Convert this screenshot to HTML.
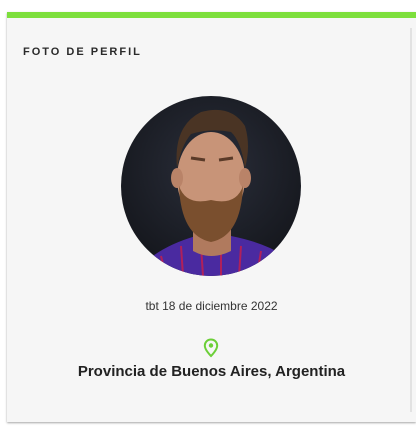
<!DOCTYPE html>
<html><head><style>
html,body{margin:0;padding:0;background:#fff;width:416px;height:428px;overflow:hidden;font-family:"Liberation Sans",Roboto,sans-serif}
.card{position:absolute;left:7px;top:12px;width:409px;height:410px;background:#f6f6f6;box-shadow:0 1px 2px rgba(0,0,0,.35)}
.bar{position:absolute;left:0;top:0;right:0;height:6px;background:#7ddf3c}
.sb{position:absolute;left:403px;top:16px;width:2px;height:384px;background:#e2e2e2}
.title{position:absolute;left:16px;top:34px;font-size:11px;font-weight:bold;letter-spacing:2px;color:#2a2a2a}
.pic{position:absolute;left:114px;top:84px;width:180px;height:180px;border-radius:50%;overflow:hidden}
.date{position:absolute;left:0;width:409px;top:287px;text-align:center;font-size:12px;color:#333}
.pin{position:absolute;left:196px;top:326px}
.loc{position:absolute;left:0;width:409px;top:351px;text-align:center;font-size:15px;font-weight:bold;color:#222}
</style></head><body>
<div class="card">
<div class="bar"></div>
<div class="sb"></div>
<div class="title">FOTO DE PERFIL</div>
<div class="pic"><svg width="180" height="180" viewBox="0 0 180 180">
<defs><radialGradient id="bg" cx="50%" cy="40%" r="60%"><stop offset="0" stop-color="#2a2e3a"/><stop offset="1" stop-color="#15171d"/></radialGradient></defs>
<rect width="180" height="180" fill="url(#bg)"/>
<path d="M20 170 Q40 150 75 140 L110 140 Q150 148 170 165 L180 180 L0 180Z" fill="#4a2aa0"/>
<path d="M40 160 L45 180 M60 150 L62 180 M80 150 L82 180 M100 150 L100 180 M120 150 L118 180 M140 155 L136 180" stroke="#b0205a" stroke-width="2"/>
<path d="M72 125 L72 155 Q90 165 110 155 L110 125Z" fill="#b07a5e"/>
<ellipse cx="90" cy="82" rx="34" ry="46" fill="#c89478"/>
<ellipse cx="56" cy="82" rx="6" ry="10" fill="#b98368"/>
<ellipse cx="124" cy="82" rx="6" ry="10" fill="#b98368"/>
<path d="M58 90 Q60 140 90 146 Q120 140 122 90 Q115 110 90 104 Q65 110 58 90Z" fill="#7a4f2e"/>
<path d="M56 72 Q52 30 80 16 Q110 8 124 30 Q130 50 124 72 Q120 45 110 36 Q90 32 70 38 Q60 50 56 72Z" fill="#4a3424"/>
<path d="M70 62 L84 64 M98 64 L112 62" stroke="#5a3a28" stroke-width="3"/>
</svg></div>
<div class="date">tbt 18 de diciembre 2022</div>
<svg class="pin" width="16" height="20" viewBox="0 0 16 20"><path d="M8 1.5C4.4 1.5 1.8 4.2 1.8 7.6 1.8 12 8 18 8 18s6.2-6 6.2-10.4C14.2 4.2 11.6 1.5 8 1.5z" fill="none" stroke="#6ccf38" stroke-width="2"/><circle cx="8" cy="7.5" r="2.2" fill="#6ccf38"/></svg>
<div class="loc">Provincia de Buenos Aires, Argentina</div>
</div>
</body></html>
